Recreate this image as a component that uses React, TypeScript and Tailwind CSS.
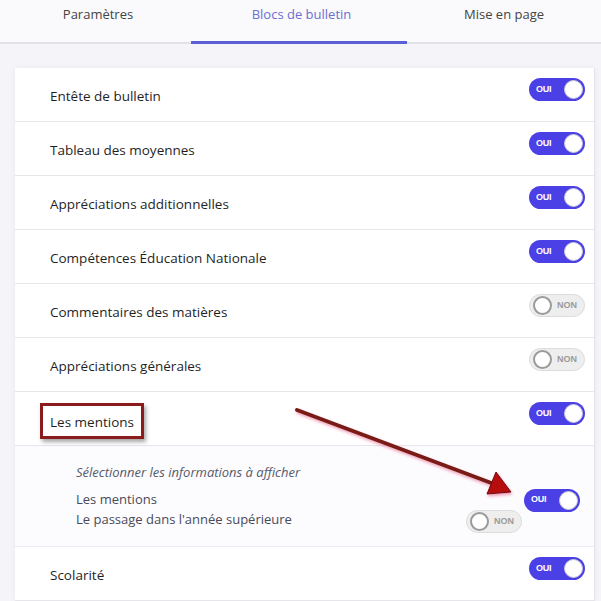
import React from "react";

const font = { fontFamily: '"Open Sans", "Noto Sans", Arial, sans-serif' };

function Toggle({ on }: { on: boolean }) {
  if (on) {
    return (
      <div className="relative flex h-[23px] w-[56px] shrink-0 items-center rounded-full bg-[#4b3fe6]">
        <span className="pl-[7px] text-[9px] font-bold tracking-tight text-white" style={{ fontFamily: '"Liberation Sans", Arial, sans-serif' }}>
          OUI
        </span>
        <span className="absolute right-[2px] top-[2px] h-[19px] w-[19px] rounded-full border border-[#c9c9d6] bg-white" />
      </div>
    );
  }
  return (
    <div className="relative flex h-[23px] w-[56px] shrink-0 items-center justify-end rounded-full border border-[#dcdcdc] bg-[#eeeeee]">
      <span className="absolute left-[3px] top-[1px] h-[19px] w-[19px] rounded-full border-2 border-[#9a9a9a] bg-white" />
      <span className="pr-[7px] text-[9px] font-bold text-[#9a9a9a]" style={{ fontFamily: '"Liberation Sans", Arial, sans-serif' }}>
        NON
      </span>
    </div>
  );
}

function Row({ label, on, boxed }: { label: string; on: boolean; boxed?: boolean }) {
  return (
    <div className="flex h-[54px] justify-between border-b border-[#e6e6ea] pl-[35px] pr-[9px]">
      {boxed ? (
        <div className="mt-[11px] -ml-[10px] self-start border-[3px] border-[#8b1c1c] bg-white px-[7px] py-[3px] shadow-[2px_3px_4px_rgba(0,0,0,0.35)]">
          <span className="text-[13.5px] text-[#1f1f1f]">{label}</span>
        </div>
      ) : (
        <span className="pt-[18px] text-[13.5px] leading-[20px] text-[#1f1f1f]">{label}</span>
      )}
      <div className="mt-[10px]">
        <Toggle on={on} />
      </div>
    </div>
  );
}

export default function App() {
  const rows = [
    { label: "Entête de bulletin", on: true },
    { label: "Tableau des moyennes", on: true },
    { label: "Appréciations additionnelles", on: true },
    { label: "Compétences Éducation Nationale", on: true },
    { label: "Commentaires des matières", on: false },
    { label: "Appréciations générales", on: false },
  ];

  return (
    <div className="relative h-[601px] w-[601px] overflow-hidden bg-[#f5f5f9]" style={font}>
      <div className="flex h-[44px] border-b-2 border-[#e2e2e6] bg-[#fafafc] text-[13px]">
        <div className="w-[196px] pt-[5px] text-center text-[#444]">Paramètres</div>
        <div className="relative w-[211px] pt-[5px] text-center text-[#6a6fd0]">
          Blocs de bulletin
          <div className="absolute -bottom-[2px] -left-[5px] h-[3px] w-[216px] bg-[#5b5fd6]" />
        </div>
        <div className="w-[194px] pt-[5px] text-center text-[#444]">Mise en page</div>
      </div>

      <div className="ml-[15px] mt-[24px] w-[580px] border-r border-[#e4e4e8] bg-white shadow-[0_0_6px_rgba(0,0,0,0.05)]">
        {rows.map((r) => (
          <Row key={r.label} label={r.label} on={r.on} />
        ))}
        <Row label="Les mentions" on boxed />

        <div className="h-[101px] border-b border-[#ececf0] bg-[#fcfcfe] pl-[61px] pr-[14px] pt-[16px]">
          <div className="text-[13px] italic leading-[20px] text-[#555a6a]">
            Sélectionner les informations à afficher
          </div>
          <div className="mt-[8px] flex h-[20px] items-center justify-between text-[13px] text-[#4a4a5a]">
            <span>Les mentions</span>
            <Toggle on />
          </div>
          <div className="flex h-[20px] items-center justify-between pr-[58px] text-[13px] text-[#4a4a5a]">
            <span>Le passage dans l'année supérieure</span>
            <div className="mt-[3px]">
              <Toggle on={false} />
            </div>
          </div>
        </div>

        <Row label="Scolarité" on />
      </div>

      <svg className="pointer-events-none absolute left-0 top-0" width="601" height="601">
        <defs>
          <filter id="sh" x="-10%" y="-10%" width="130%" height="140%">
            <feDropShadow dx="1" dy="2" stdDeviation="1.5" floodColor="#e23a6a" floodOpacity="0.5" />
          </filter>
        </defs>
        <g filter="url(#sh)">
          <line x1="297" y1="410" x2="494" y2="484" stroke="#7a1a14" strokeWidth="4" strokeLinecap="round" />
          <polygon points="511,492 487,494 496,472" fill="#b80d0d" stroke="#6b0f0f" strokeWidth="1" />
        </g>
      </svg>
    </div>
  );
}
